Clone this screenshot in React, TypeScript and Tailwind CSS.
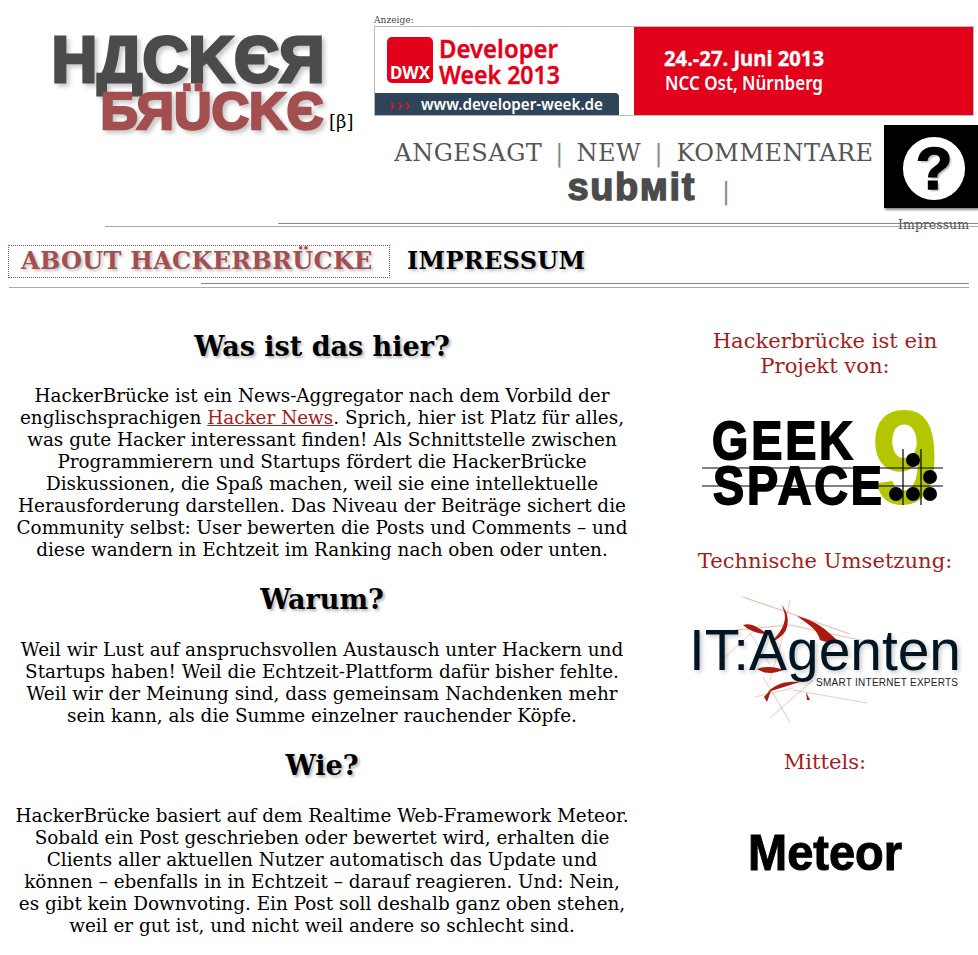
import React from "react";

const sans = { fontFamily: '"Liberation Sans", Arial, sans-serif' };
const ad = { fontFamily: '"Noto Sans", "Open Sans", sans-serif' };

function Logo() {
  return (
    <svg width="320" height="120" viewBox="40 25 320 120" className="block">
      <g className="drop-shadow-[3px_3px_2px_rgba(0,0,0,0.22)]" style={sans} fontWeight="700">
        <text x="51.5" y="82" fontSize="64" fill="#4b4b4b" textLength="273" lengthAdjust="spacingAndGlyphs" stroke="#4b4b4b" strokeWidth="3">HДCKЄЯ</text>
        <text x="100.5" y="129" fontSize="52" fill="#a34f50" textLength="223" lengthAdjust="spacingAndGlyphs" stroke="#a34f50" strokeWidth="2.6">БЯÜCKЄ</text>
      </g>
      <text x="329" y="128" fontSize="18" fill="#000" fontFamily='"DejaVu Serif", serif'>[β]</text>
    </svg>
  );
}

function AdBanner() {
  return (
    <div className="w-[600px] h-[90px] border border-[#bbbbbb]">
      <svg width="598" height="88" viewBox="0 0 598 88" className="block" style={ad}>
        <rect width="598" height="88" fill="#fff" />
        <rect x="259" width="339" height="88" fill="#e2001a" />
        <path d="M0 66H240Q244 66 244 70V88H0Z" fill="#2e4459" />
        <rect x="12" y="10" width="46" height="46" rx="5" fill="#e2001a" />
        <text x="15" y="52" fontSize="17" fontWeight="700" fill="#fff" textLength="40" lengthAdjust="spacingAndGlyphs">DWX</text>
        <g fill="#e2001a" stroke="#e2001a" strokeWidth="0.4" fontSize="26" fontWeight="600">
          <text x="64" y="31" textLength="119" lengthAdjust="spacingAndGlyphs">Developer</text>
          <text x="64" y="57" textLength="121" lengthAdjust="spacingAndGlyphs">Week 2013</text>
        </g>
        <text x="14" y="83" fontSize="15" fontWeight="700" fill="#d8102a" textLength="21" lengthAdjust="spacing">›››</text>
        <text x="46" y="83" fontSize="16" fontWeight="600" fill="#fff" textLength="182" lengthAdjust="spacingAndGlyphs">www.developer-week.de</text>
        <text x="289" y="39" fontSize="21" fontWeight="700" fill="#fff" stroke="#fff" strokeWidth="0.3" textLength="160" lengthAdjust="spacingAndGlyphs">24.-27. Juni 2013</text>
        <text x="290" y="63" fontSize="19" fontWeight="600" fill="#fff" textLength="158" lengthAdjust="spacingAndGlyphs">NCC Ost, Nürnberg</text>
      </svg>
    </div>
  );
}

function QuestionIcon() {
  return (
    <div className="w-[94px] h-[83px] bg-black shadow-[1px_2px_2px_rgba(0,0,0,0.45)] flex items-start pl-[19px] pt-[12px]">
      <div className="w-[62px] h-[63px] rounded-full bg-white flex items-center justify-center">
        <span className="text-[60px] leading-none font-bold text-black [-webkit-text-stroke:1.5px_#000] [text-shadow:2px_2px_2px_rgba(0,0,0,0.3)]" style={sans}>?</span>
      </div>
    </div>
  );
}

function GeekSpace() {
  const dots = [[913, 460], [930, 477], [896, 494], [913, 494], [930, 494]];
  return (
    <svg width="300" height="120" viewBox="675 400 300 120" className="block" style={sans}>
      <text x="871" y="504" fontSize="134" fontWeight="700" fill="#b3c600" textLength="68" lengthAdjust="spacingAndGlyphs">9</text>
      <g fontSize="53" fontWeight="700" fill="#000" stroke="#000" strokeWidth="1.8">
        <text transform="translate(712 459) scale(0.88 1)" textLength="160" lengthAdjust="spacing">GEEK</text>
        <text transform="translate(713 504) scale(0.88 1)" textLength="192" lengthAdjust="spacing">SPACE</text>
      </g>
      <path d="M702 468H943M702 486H943M903 449V505M921 449V505" stroke="#000" strokeWidth="1.2" />
      {dots.map(([x, y]) => <circle key={`${x}-${y}`} cx={x} cy={y} r="7" fill="#000" />)}
    </svg>
  );
}

function ItAgenten() {
  return (
    <svg width="300" height="135" viewBox="675 590 300 135" className="block" style={sans}>
      <g fill="none" stroke="#d0563a" strokeOpacity="0.4" className="blur-[0.3px]">
        <path d="M743 597L850 634" strokeWidth="1.2" />
        <path d="M735 630L790 625L860 640" strokeWidth="1" />
        <path d="M790 600L782 640L770 680" strokeWidth="0.8" />
        <path d="M763 677L790 722" strokeWidth="0.9" />
        <path d="M770 718L813 680" strokeWidth="0.9" />
        <path d="M793 690L867 703" strokeWidth="0.8" />
        <path d="M755 697L793 688" strokeWidth="0.8" />
        <path d="M722 660L760 625" strokeWidth="0.7" />
        <path d="M745 625L770 665" strokeWidth="0.7" />
      </g>
      <g fill="#a81c10" className="blur-[0.4px]">
        <path d="M797 616C820 622 828 632 838 641C832 644 826 642 820 640C818 630 808 624 797 616Z" />
        <path d="M782 605C787 612 790 620 786 630C783 636 776 640 770 643C778 635 784 628 785 618C785 612 783 609 782 605Z" />
        <path d="M743 625C752 622 758 628 768 634C758 634 750 631 743 625Z" />
        <path d="M757 669C768 665 778 668 784 670C775 673 766 675 757 669Z" />
        <path d="M768 692C777 682 790 681 800 682C790 685 780 688 768 692Z" />
        <path d="M806 692L810 700L807 700Z" />
        <path d="M764 697L772 688L767 702Z" />
      </g>
      <text x="689" y="670" fontSize="58" fill="#021522" textLength="272" lengthAdjust="spacingAndGlyphs" className="drop-shadow-[2px_2px_2px_rgba(0,0,0,0.22)]">IT:Agenten</text>
      <text x="816" y="686" fontSize="10" fill="#222" textLength="142" lengthAdjust="spacing">SMART INTERNET EXPERTS</text>
    </svg>
  );
}

function MeteorLogo() {
  return (
    <svg width="300" height="55" viewBox="675 825 300 55" className="block" style={sans}>
      <text x="748" y="871" fontSize="50" fontWeight="700" fill="#000" stroke="#000" strokeWidth="1" textLength="154" lengthAdjust="spacingAndGlyphs">Meteor</text>
    </svg>
  );
}

function H({ children, first }: { children: React.ReactNode; first?: boolean }) {
  return (
    <h2 className={`h-[34px] leading-[36px] text-[27px] font-bold text-black [text-shadow:2px_2px_3px_rgba(0,0,0,0.3)] ${first ? "mb-[22px]" : "mt-[21px] mb-[23px]"}`}>
      {children}
    </h2>
  );
}

function Side({ children }: { children: React.ReactNode }) {
  return <h3 className="text-[21.1px] leading-[25px] text-[#a51c1c] font-normal whitespace-nowrap">{children}</h3>;
}

export default function App() {
  return (
    <div className="w-[978px] h-[955px] overflow-hidden bg-white text-black" style={{ fontFamily: '"DejaVu Serif", serif' }}>
      <header className="flex h-[223px]">
        <div className="w-[374px] shrink-0 pt-[25px] pl-[40px]">
          <Logo />
        </div>
        <div className="flex-1 pt-[15px]">
          <div className="text-[9px] leading-[11px] text-[#444] tracking-[0.05px]">Anzeige:</div>
          <AdBanner />
          <div className="flex mt-[9px]">
            <nav className="w-[510px] text-center text-[#555] text-[24px] leading-[28px] font-light tracking-[0.5px] pt-[14px] pl-[10px]">
              <div className="whitespace-nowrap">
                <span>ANGESAGT</span><span className="text-[24px] text-[#888] mx-[12.8px]">|</span><span>NEW</span><span className="text-[24px] text-[#888] mx-[13.3px]">|</span><span>KOMMENTARE</span>
              </div>
              <div className="flex justify-center items-center mt-[2px] pl-[30px]">
                <span className="text-[38px] leading-[36px] font-bold text-[#4b4b4b] tracking-[1.6px] [-webkit-text-stroke:1.4px_#4b4b4b]" style={sans}>subмit</span>
                <span className="text-[24px] text-[#888] ml-[26px] mt-[8px]">|</span>
              </div>
            </nav>
            <div className="w-[94px]">
              <QuestionIcon />
              <div className="text-[12.5px] leading-[14px] text-[#555] text-right pr-[9px] mt-[10px]">Impressum</div>
            </div>
          </div>
        </div>
      </header>

      <div className="ml-[278px] h-px bg-[#888888]" />
      <div className="ml-[105px] mt-[2px] h-px bg-[#aaaaaa]" />

      <div className="flex items-center mt-[18px] ml-[8px] h-[33px]">
        <div className="w-[382px] h-[33px] border border-dotted border-[#a34f50] pl-[12px] text-[24px] leading-[30px] font-bold text-[#a34f50] tracking-[0.3px] [text-shadow:2px_2px_3px_rgba(0,0,0,0.25)] whitespace-nowrap">
          ABOUT HACKERBRÜCKE
        </div>
        <div className="ml-[17px] -mt-[2px] text-[24px] leading-[28px] font-bold tracking-[0.3px] [text-shadow:2px_2px_3px_rgba(0,0,0,0.25)]">IMPRESSUM</div>
      </div>
      <div className="ml-[201px] mr-[9px] mt-[5px] h-px bg-[#888888]" />
      <div className="ml-[9px] mr-[9px] mt-[3px] h-px bg-[#aaaaaa]" />

      <main className="flex pt-[41px]">
        <section className="w-[620px] ml-[12px] text-center text-[18.4px] leading-[22px]">
          <H first>Was ist das hier?</H>
          <p>
            HackerBrücke ist ein News-Aggregator nach dem Vorbild der englischsprachigen{" "}
            <a className="text-[#a51c1c] underline">Hacker News</a>. Sprich, hier ist Platz für alles, was gute Hacker interessant finden! Als Schnittstelle zwischen Programmierern und Startups fördert die HackerBrücke Diskussionen, die Spaß machen, weil sie eine intellektuelle Herausforderung darstellen. Das Niveau der Beiträge sichert die Community selbst: User bewerten die Posts und Comments – und diese wandern in Echtzeit im Ranking nach oben oder unten.
          </p>
          <H>Warum?</H>
          <p>
            Weil wir Lust auf anspruchsvollen Austausch unter Hackern und Startups haben! Weil die Echtzeit-Plattform dafür bisher fehlte. Weil wir der Meinung sind, dass gemeinsam Nachdenken mehr sein kann, als die Summe einzelner rauchender Köpfe.
          </p>
          <H>Wie?</H>
          <p>
            HackerBrücke basiert auf dem Realtime Web-Framework Meteor. Sobald ein Post geschrieben oder bewertet wird, erhalten die Clients aller aktuellen Nutzer automatisch das Update und können – ebenfalls in in Echtzeit – darauf reagieren. Und: Nein, es gibt kein Downvoting. Ein Post soll deshalb ganz oben stehen, weil er gut ist, und nicht weil andere so schlecht sind.
          </p>
        </section>
        <aside className="w-[300px] ml-[43px] -mt-[1px] text-center">
          <Side>Hackerbrücke ist ein<br />Projekt von:</Side>
          <div className="mt-[22px]"><GeekSpace /></div>
          <div className="mt-[28px]"><Side>Technische Umsetzung:</Side></div>
          <div className="mt-[17px]"><ItAgenten /></div>
          <div className="mt-[24px]"><Side>Mittels:</Side></div>
          <div className="mt-[50px]"><MeteorLogo /></div>
        </aside>
      </main>
    </div>
  );
}
